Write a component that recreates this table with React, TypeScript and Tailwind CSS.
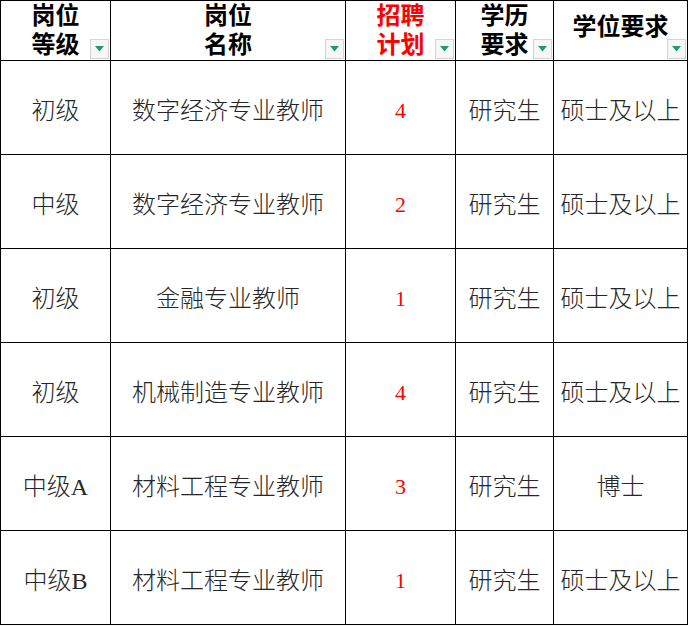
import React from "react";

const rows = [
  { level: "初级", name: "数字经济专业教师", plan: "4", edu: "研究生", degree: "硕士及以上" },
  { level: "中级", name: "数字经济专业教师", plan: "2", edu: "研究生", degree: "硕士及以上" },
  { level: "初级", name: "金融专业教师", plan: "1", edu: "研究生", degree: "硕士及以上" },
  { level: "初级", name: "机械制造专业教师", plan: "4", edu: "研究生", degree: "硕士及以上" },
  { level: "中级A", name: "材料工程专业教师", plan: "3", edu: "研究生", degree: "博士" },
  { level: "中级B", name: "材料工程专业教师", plan: "1", edu: "研究生", degree: "硕士及以上" },
];

const FilterButton = () => (
  <span className="absolute right-[1px] bottom-[1px] flex h-[20px] w-[19px] items-center justify-center border border-[#d4d4d4] bg-[#f7f7f7]">
    <svg width="9" height="6" viewBox="0 0 9 6">
      <path d="M0 0 L9 0 L4.5 5.5 Z" fill="#1e9d6a" />
    </svg>
  </span>
);

const font = { fontFamily: '"Liberation Serif", "Noto Sans CJK SC", serif' };

export default function App() {
  return (
    <div className="bg-white" style={font}>
      <table className="table-fixed border-collapse text-[24px] text-[#262626]">
        <colgroup>
          <col className="w-[110px]" />
          <col className="w-[235px]" />
          <col className="w-[110px]" />
          <col className="w-[98px]" />
          <col className="w-[134px]" />
        </colgroup>
        <thead>
          <tr className="h-[60px]">
            <th className="relative border border-black p-0 text-center align-middle font-bold leading-[29px] text-black">
              岗位<br />等级
              <FilterButton />
            </th>
            <th className="relative border border-black p-0 text-center align-middle font-bold leading-[29px] text-black">
              岗位<br />名称
              <FilterButton />
            </th>
            <th className="relative border border-black p-0 text-center align-middle font-bold leading-[29px] text-[#ff0000]">
              招聘<br />计划
              <FilterButton />
            </th>
            <th className="relative border border-black p-0 text-center align-middle font-bold leading-[29px] text-black">
              学历<br />要求
              <FilterButton />
            </th>
            <th className="relative border border-black p-0 pb-[6px] text-center align-middle font-bold leading-[29px] text-black">
              学位要求
              <FilterButton />
            </th>
          </tr>
        </thead>
        <tbody className="font-light">
          {rows.map((r, i) => (
            <tr key={i} className="h-[94px]">
              <td className="border border-black p-0 pt-[6px] text-center align-middle">{r.level}</td>
              <td className="border border-black p-0 pt-[6px] text-center align-middle">{r.name}</td>
              <td className="border border-black p-0 pt-[6px] text-center align-middle text-[22px] font-normal text-[#ff0000]">{r.plan}</td>
              <td className="border border-black p-0 pt-[6px] text-center align-middle">{r.edu}</td>
              <td className="border border-black p-0 pt-[6px] text-center align-middle">{r.degree}</td>
            </tr>
          ))}
        </tbody>
      </table>
    </div>
  );
}
